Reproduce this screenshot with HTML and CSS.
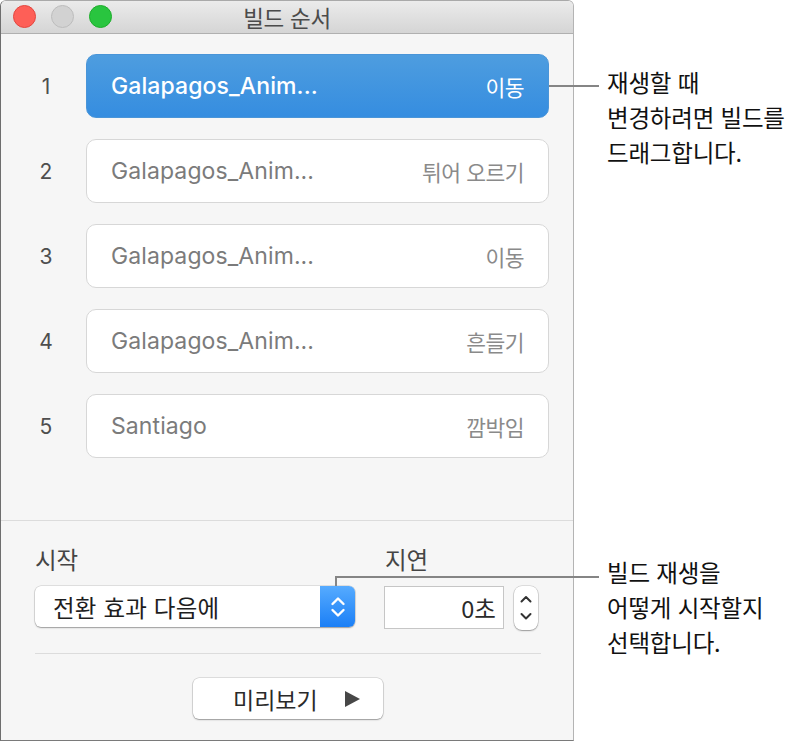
FILE: index.html
```html
<!DOCTYPE html>
<html lang="ko">
<head>
<meta charset="utf-8">
<title>빌드 순서</title>
<link rel="stylesheet" href="styles.css">
</head>
<body>
<div class="stage">
  <div class="window">
    <div class="titlebar">
      <div class="lights">
        <span class="light red"></span>
        <span class="light gray"></span>
        <span class="light green"></span>
      </div>
      <div class="title">빌드 순서</div>
      <div></div>
    </div>
    <div class="list">
      <div class="row">
        <span class="num">1</span>
        <div class="item selected"><span class="name">Galapagos_Anim...</span><span class="effect">이동</span></div>
      </div>
      <div class="row">
        <span class="num">2</span>
        <div class="item"><span class="name">Galapagos_Anim...</span><span class="effect">튀어 오르기</span></div>
      </div>
      <div class="row">
        <span class="num">3</span>
        <div class="item"><span class="name">Galapagos_Anim...</span><span class="effect">이동</span></div>
      </div>
      <div class="row">
        <span class="num">4</span>
        <div class="item"><span class="name">Galapagos_Anim...</span><span class="effect">흔들기</span></div>
      </div>
      <div class="row">
        <span class="num">5</span>
        <div class="item"><span class="name">Santiago</span><span class="effect">깜박임</span></div>
      </div>
    </div>
    <div class="divider"></div>
    <div class="controls">
      <div class="fields">
        <div class="field">
          <div class="label">시작</div>
          <div class="popup">
            <span class="popup-text">전환 효과 다음에</span>
            <span class="popup-arrows">
              <svg width="16" height="22" viewBox="0 0 16 22"><polyline points="2.5,8 8,2.5 13.5,8" fill="none" stroke="#fff" stroke-width="2.4" stroke-linecap="round" stroke-linejoin="round"/><polyline points="2.5,14 8,19.5 13.5,14" fill="none" stroke="#fff" stroke-width="2.4" stroke-linecap="round" stroke-linejoin="round"/></svg>
            </span>
          </div>
        </div>
        <div class="field">
          <div class="label">지연</div>
          <div class="delay-row">
            <div class="textfield">0초</div>
            <div class="stepper">
              <svg width="12" height="26" viewBox="0 0 12 26"><polyline points="1.5,6.5 6,2 10.5,6.5" fill="none" stroke="#333" stroke-width="2" stroke-linecap="round" stroke-linejoin="round"/><polyline points="1.5,19 6,23.5 10.5,19" fill="none" stroke="#333" stroke-width="2" stroke-linecap="round" stroke-linejoin="round"/></svg>
            </div>
          </div>
        </div>
      </div>
      <div class="sep"></div>
      <div class="actions">
        <div class="preview">
          <span class="preview-text">미리보기</span>
          <svg width="16" height="16" viewBox="0 0 16 16"><polygon points="1,0 16,8 1,16" fill="#474747"/></svg>
        </div>
      </div>
    </div>
  </div>

  <div class="callout callout-top">
    <div class="hline"></div>
    <p class="note">재생할 때<br>변경하려면 빌드를<br>드래그합니다.</p>
  </div>
  <div class="callout callout-bottom">
    <div class="vline"></div>
    <div class="hline"></div>
    <p class="note">빌드 재생을<br>어떻게 시작할지<br>선택합니다.</p>
  </div>
</div>
</body>
</html>
```

FILE: styles.css
```css
html, body {
  margin: 0;
  padding: 0;
  background: #ffffff;
}

body {
  font-family: "Inter", "Noto Sans CJK KR", sans-serif;
  color: #222;
}

.stage {
  position: relative;
  width: 795px;
  height: 742px;
}

.window {
  box-sizing: border-box;
  width: 574px;
  height: 741px;
  background: #f6f6f6;
  border-left: 1px solid #6e6e6e;
  border-right: 1px solid #b4b4b4;
  border-bottom: 1px solid #7a7a7a;
  border-top: 1px solid #a9a9a9;
  border-radius: 6px 6px 0 0;
  overflow: hidden;
  display: flex;
  flex-direction: column;
}

.titlebar {
  box-sizing: border-box;
  height: 33px;
  flex: none;
  background: linear-gradient(#ebebeb, #d5d5d5);
  border-bottom: 1px solid #b0b0b0;
  display: grid;
  grid-template-columns: 1fr auto 1fr;
  align-items: center;
}

.lights {
  display: flex;
  gap: 15px;
  padding-left: 12px;
  padding-bottom: 1px;
}

.light {
  box-sizing: border-box;
  width: 23px;
  height: 23px;
  border-radius: 50%;
}

.light.red { background: #fe5f57; border: 1px solid #e2463f; }
.light.gray { background: #d2d2d2; border: 1px solid #bcbcbc; }
.light.green { background: #29c53f; border: 1px solid #1dad2b; }

.title {
  font-family: "Noto Sans CJK KR", sans-serif;
  font-size: 22.5px;
  letter-spacing: -0.3px;
  color: #4b4b4b;
  line-height: 32px;
}

.list {
  box-sizing: border-box;
  height: 486px;
  flex: none;
  padding-top: 20px;
  display: flex;
  flex-direction: column;
  gap: 21px;
}

.row {
  display: flex;
  align-items: center;
}

.num {
  box-sizing: border-box;
  width: 85px;
  padding-left: 5px;
  text-align: center;
  font-size: 21px;
  color: #4e4e4e;
}

.item {
  box-sizing: border-box;
  width: 463px;
  height: 64px;
  background: #ffffff;
  border: 1px solid #d7d7d7;
  border-radius: 10px;
  padding: 0 24px;
  display: flex;
  align-items: center;
  justify-content: space-between;
}

.name {
  font-size: 23px;
  color: #7b7b7b;
  letter-spacing: 0.1px;
}

.effect {
  font-family: "Noto Sans CJK KR", sans-serif;
  font-size: 21.5px;
  letter-spacing: -0.5px;
  color: #8a8a8a;
}

.item.selected {
  background: linear-gradient(#4e9ddf, #358de0);
  border-color: #4a95d8;
}

.item.selected .name {
  color: #ffffff;
  font-weight: 500;
}

.item.selected .effect {
  color: #ffffff;
}

.divider {
  height: 1px;
  background: #dcdcdc;
  flex: none;
}

.controls {
  padding: 24px 32px 0 34px;
}

.fields {
  display: grid;
  grid-template-columns: 320px auto;
  column-gap: 29px;
  align-items: start;
}

.label {
  font-family: "Noto Sans CJK KR", sans-serif;
  font-size: 23.5px;
  line-height: 28px;
  color: #454545;
  margin-bottom: 13px;
}

.field + .field .label {
  padding-left: 1px;
}

.popup {
  box-sizing: border-box;
  height: 41px;
  background: #ffffff;
  border-radius: 6px;
  box-shadow: 0 0 0 0.5px rgba(0,0,0,0.18), 0 1px 1.5px rgba(0,0,0,0.3);
  display: flex;
  align-items: stretch;
  overflow: hidden;
}

.popup-text {
  flex: 1;
  display: flex;
  align-items: center;
  padding-left: 18px;
  font-family: "Noto Sans CJK KR", sans-serif;
  font-size: 23.5px;
  letter-spacing: 0.2px;
  color: #1e1e1e;
}

.popup-arrows {
  width: 35px;
  background: linear-gradient(#56abff, #1b7ff6);
  display: flex;
  align-items: center;
  justify-content: center;
}

.delay-row {
  display: flex;
  align-items: flex-start;
  gap: 10px;
}

.textfield {
  box-sizing: border-box;
  width: 120px;
  height: 43px;
  background: #ffffff;
  border: 1px solid #c6c6c6;
  padding-right: 7px;
  display: flex;
  align-items: center;
  justify-content: flex-end;
  font-family: "Noto Sans CJK KR", sans-serif;
  font-size: 23.5px;
  color: #2a2a2a;
}

.stepper {
  box-sizing: border-box;
  width: 24px;
  height: 44px;
  background: #ffffff;
  border-radius: 8px;
  box-shadow: 0 0 0 0.5px rgba(0,0,0,0.2), 0 1px 1.5px rgba(0,0,0,0.3);
  display: flex;
  align-items: center;
  justify-content: center;
}

.sep {
  height: 1px;
  background: #dcdcdc;
  margin-top: 23px;
}

.actions {
  display: flex;
  justify-content: center;
  margin-top: 24px;
}

.preview {
  box-sizing: border-box;
  width: 190px;
  height: 41px;
  background: #ffffff;
  border-radius: 6px;
  box-shadow: 0 0 0 0.5px rgba(0,0,0,0.2), 0 1px 1.5px rgba(0,0,0,0.3);
  display: flex;
  align-items: center;
  padding-left: 40px;
  gap: 26px;
}

.preview-text {
  font-family: "Noto Sans CJK KR", sans-serif;
  font-size: 23px;
  color: #2a2a2a;
}

/* callout annotations */
.callout {
  position: absolute;
}

.note {
  position: absolute;
  margin: 0;
  left: 58px;
  white-space: nowrap;
  font-family: "Noto Sans CJK KR", sans-serif;
  font-size: 23.5px;
  line-height: 35px;
  letter-spacing: -0.2px;
  color: #111;
}

.callout-top {
  left: 549px;
  top: 85px;
}

.callout-top .hline {
  width: 50px;
  height: 2px;
  background: #858585;
}

.callout-top .note {
  top: -20px;
}

.callout-bottom {
  left: 335px;
  top: 576px;
}

.callout-bottom .hline {
  position: absolute;
  left: 0;
  top: 0;
  width: 264px;
  height: 2px;
  background: #858585;
}

.callout-bottom .vline {
  position: absolute;
  left: 0;
  top: 0;
  width: 2px;
  height: 10px;
  background: #858585;
}

.callout-bottom .note {
  left: 272px;
  top: -21px;
}
```
